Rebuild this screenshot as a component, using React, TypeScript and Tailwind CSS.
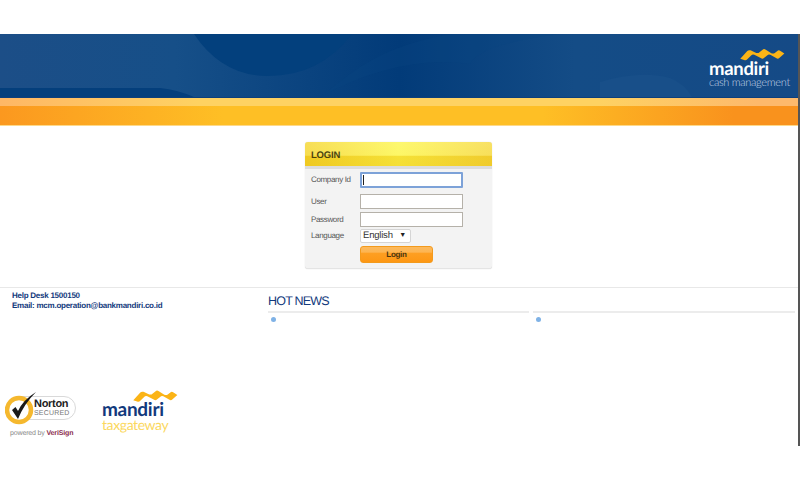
const WavePath = "M2 17 L13 5 Q15 3 18 4 L27 8 Q30 9 32 7 L37 3 Q39 1 42 3 L50 8 Q53 10 56 8 L60 5 Q62 3 65 5 L71 9 L63 16 Q61 18 58 16 L49 11 Q46 10 44 12 L39 16 Q37 18 34 16 L24 11 Q21 10 19 12 L13 18 Q11 20 8 19 Z";

function Wave({ className }: { className: string }) {
  return (
    <svg viewBox="0 0 72 21" className={className}>
      <path d={WavePath} fill="#fbb416" />
    </svg>
  );
}

function Banner() {
  return (
    <div>
      <div className="relative h-[63px] overflow-hidden bg-[#1b4f8a]">
        <svg viewBox="0 0 798 63" className="absolute inset-0 h-full w-full" preserveAspectRatio="none">
          <defs>
            <linearGradient id="bannerFade" x1="0" x2="1" y1="0" y2="0">
              <stop offset="0" stopColor="#1c4e87" />
              <stop offset="0.22" stopColor="#164f88" />
              <stop offset="0.5" stopColor="#023b79" />
              <stop offset="0.72" stopColor="#144c86" />
              <stop offset="1" stopColor="#154a86" />
            </linearGradient>
          </defs>
          <rect width="798" height="63" fill="url(#bannerFade)" />
          <path d="M194 0 Q222 42 268 42 Q320 42 352 0 Z" fill="#03407d" />
          <path d="M0 54 L160 54 Q178 56 194 63 L0 63 Z" fill="#043f7c" />
          <path d="M320 63 Q400 20 470 30 Q480 10 560 0 L452 0 Q390 10 350 40 Z" fill="#0a4581" opacity="0.3" />
          <path d="M600 48 Q640 36 670 44 Q685 50 692 63 L600 63 Z" fill="#184f89" />
        </svg>
        <div className="absolute left-[709px] top-[13px] flex w-[82px] flex-col items-start">
          <Wave className="ml-[30px] h-[15px] w-[46px]" />
          <span className="mt-[-1px] whitespace-nowrap text-[18.5px] font-bold leading-[15px] tracking-[-0.3px] text-white [font-family:'Lato',sans-serif]">mandiri</span>
          <span className="mt-[1px] whitespace-nowrap text-[11px] font-light leading-[12px] tracking-[-0.3px] text-[#c6d5e6] [font-family:'Lato',sans-serif]">cash management</span>
        </div>
      </div>
      <div className="h-px bg-[#0d3f7c]" />
      <div className="h-[8px] bg-[linear-gradient(90deg,#feb765,#fed262_25%,#fed262_75%,#fdb96c_95%)]" />
      <div className="h-[19px] bg-[linear-gradient(90deg,#fb981f,#febf25_28%,#febf25_68%,#f9921d_92%)]" />
      <div className="h-px bg-[#fdd98a]" />
    </div>
  );
}

function FieldRow({ label, focused, className }: { label: string; focused?: boolean; className: string }) {
  return (
    <div className={`flex items-center ${className}`}>
      <span className="w-[49px] shrink-0 text-[8px] tracking-[-0.35px] text-[#555]">{label}</span>
      {focused ? (
        <div className="h-[16px] w-[103px] rounded-[1px] border-2 border-[#7da2d8] bg-white">
          <div className="ml-px mt-px h-[10px] w-px bg-[#222]" />
        </div>
      ) : (
        <div className="h-[15px] w-[103px] border border-[#b5b1a9] bg-white" />
      )}
    </div>
  );
}

function LoginCard() {
  return (
    <div className="h-[127px] w-[187px] overflow-hidden rounded-[3px] border-b border-[#e4e4e4] bg-[#f3f3f3] shadow-[0_0_1px_#ccc]">
      <div className="h-[24px] bg-[linear-gradient(90deg,#f5d62f,#fdf64c_50%,#f6d93e)]">
        <div className="h-full bg-[linear-gradient(180deg,rgba(255,255,255,0.2)_0%,rgba(255,255,255,0.15)_55%,rgba(225,170,0,0.28)_60%,rgba(225,170,0,0.3)_100%)] pl-[6px] pt-[7px] text-[9.5px] font-bold leading-[14px] tracking-[-0.2px] text-[#4b4310]">
          LOGIN
        </div>
      </div>
      <div className="h-[3px] bg-[#dcdcdc]" />
      <div className="pl-[6px] pt-[3px]">
        <FieldRow label="Company Id" focused className="h-[16px]" />
        <FieldRow label="User" className="mt-[6px] h-[15px]" />
        <FieldRow label="Password" className="mt-[3px] h-[15px]" />
        <div className="mt-[2px] flex h-[14px] items-center">
          <span className="w-[49px] shrink-0 text-[8px] tracking-[-0.35px] text-[#555]">Language</span>
          <div className="flex h-[14px] w-[51px] items-center justify-between rounded-[2px] border border-[#d5d5d5] bg-white pl-[2px] pr-[4px] pt-[1px] text-[9.5px] tracking-[-0.2px] text-[#333]">
            <span>English</span>
            <span className="text-[7px] text-[#222]">▼</span>
          </div>
        </div>
        <div className="ml-[49px] mt-[3px] flex h-[17px] w-[73px] items-center justify-center rounded-[3px] border border-[#f39a1c] bg-[linear-gradient(180deg,#fcb95c_0%,#fdb552_35%,#fe9f22_40%,#fd9714_100%)] text-[8px] font-bold tracking-[-0.3px] text-[#4a3510]">
          Login
        </div>
      </div>
    </div>
  );
}

function NortonBadge() {
  return (
    <div className="w-[72px]">
      <div className="relative h-[31px]">
        <div className="absolute left-[15px] top-[6px] h-[24px] w-[56px] rounded-r-[13px] border border-[#d9d9d9] bg-white pl-[13px] text-[#222]">
          <div className="pt-[2px] text-[11px] font-bold leading-[11px] tracking-[-0.3px]">Norton</div>
          <div className="text-[7px] leading-[8px] tracking-[0.2px] text-[#777]">SECURED</div>
        </div>
        <svg viewBox="0 0 36 36" className="absolute left-0 top-0 h-[36px] w-[36px]">
          <circle cx="14" cy="20" r="12" fill="#fff" stroke="#f5b82e" strokeWidth="4.5" />
          <path d="M7 20 L13 29 Q19 14 31 2 Q18 10 13 21 L10.5 17 Z" fill="#1a1a1a" />
        </svg>
      </div>
      <div className="mt-[9px] whitespace-nowrap pl-[5px] text-[7px] leading-[8px] tracking-[-0.15px] text-[#888]">
        powered by <span className="font-bold text-[#8a2b4b]">VeriSign</span>
      </div>
    </div>
  );
}

function TaxgatewayLogo() {
  return (
    <div className="flex w-[76px] flex-col items-start">
      <Wave className="ml-[30px] h-[14px] w-[46px]" />
      <span className="mt-[-1px] whitespace-nowrap text-[19px] font-bold leading-[16px] tracking-[-0.3px] text-[#12397c] [font-family:'Lato',sans-serif]">mandiri</span>
      <span className="whitespace-nowrap text-[14px] leading-[14px] tracking-[-0.4px] text-[#fbd85e] [font-family:'Lato',sans-serif]">taxgateway</span>
    </div>
  );
}

function NewsColumn({ className }: { className: string }) {
  return (
    <div className={className}>
      <div className="h-[2px] bg-[#ececec]" />
      <div className="ml-[3px] mt-[4px] h-[5px] w-[5px] rounded-full bg-[#7fb2e6]" />
    </div>
  );
}

export default function App() {
  return (
    <div className="h-[480px] w-[800px] bg-white [font-family:'Liberation_Sans',sans-serif] [text-rendering:geometricPrecision]">
      <div className="h-[34px]" />
      <div className="h-[412px] border-r-2 border-[#555]">
        <Banner />
        <div className="flex h-[161px] justify-center pr-[1px] pt-[16px]">
          <LoginCard />
        </div>
        <div className="flex h-[159px] border-t border-[#e8e8e8]">
          <div className="w-[268px] shrink-0">
            <div className="pl-[12px] pt-[3px] text-[8px] font-bold leading-[10px] tracking-[-0.25px] text-[#12397c]">
              <div>Help Desk 1500150</div>
              <div>Email: mcm.operation@bankmandiri.co.id</div>
            </div>
            <div className="mt-[79px] flex items-start gap-[25px] pl-[5px]">
              <NortonBadge />
              <div className="mt-[-1px]">
                <TaxgatewayLogo />
              </div>
            </div>
          </div>
          <div className="min-w-0 flex-1 pr-[3px]">
            <div className="pt-[4px] text-[12.5px] leading-[19px] tracking-[-0.8px] text-[#12397c]">HOT NEWS</div>
            <div className="flex gap-[4px]">
              <NewsColumn className="w-[261px]" />
              <NewsColumn className="w-[262px]" />
            </div>
          </div>
        </div>
      </div>
    </div>
  );
}
